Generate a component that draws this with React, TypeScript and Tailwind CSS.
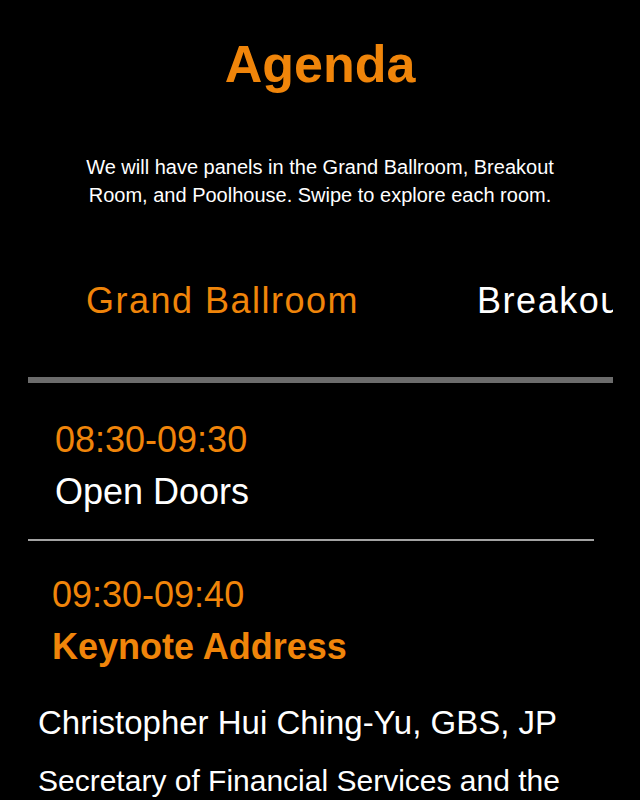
const rooms = ["Grand Ballroom", "Breakout Room", "Poolhouse"];

export default function App() {
  return (
    <div className="min-h-screen bg-black text-white font-['Liberation_Sans',Arial,sans-serif] overflow-hidden">
      <h1 className="pt-[34px] text-center text-[52px] leading-[60px] font-bold text-[#f0850a]">Agenda</h1>

      <p className="mt-[59px] mx-auto w-[500px] text-center text-[20px] leading-[28px]">
        We will have panels in the Grand Ballroom, Breakout Room, and Poolhouse. Swipe to explore each room.
      </p>

      <div className="pl-[28px] pr-[27px]">
        {/* room tabs, scrolled sideways */}
        <div className="mt-[70px] flex overflow-hidden whitespace-nowrap">
          {rooms.map((room, i) => (
            <div
              key={room}
              className={
                "shrink-0 pl-[58px] pr-[60px] text-[36px] leading-[44px] tracking-[1.5px] " +
                (i === 0 ? "text-[#f0850a]" : "text-white")
              }
            >
              {room}
            </div>
          ))}
        </div>
        <div className="mt-[54px] h-[6px] bg-[#6c6c6c]" />

        <div className="mt-[36px] pl-[27px]">
          <div className="text-[36px] leading-[42px] text-[#f0850a]">08:30-09:30</div>
          <div className="mt-[10px] text-[36px] leading-[42px]">Open Doors</div>
        </div>
        <div className="mt-[26px] mr-[19px] h-[2px] bg-[#a3a3a3]" />

        <div className="mt-[33px] pl-[24px]">
          <div className="text-[36px] leading-[42px] text-[#f0850a]">09:30-09:40</div>
          <div className="mt-[10px] text-[36px] leading-[42px] font-bold text-[#f0850a]">Keynote Address</div>
        </div>

        <div className="mt-[35px] pl-[10px] pr-[20px]">
          <div className="text-[33px] leading-[40px]">Christopher Hui Ching-Yu, GBS, JP</div>
          <div className="mt-[18px] text-[30px] leading-[40px]">
            Secretary of Financial Services and the Treasury
          </div>
        </div>
      </div>
    </div>
  );
}
